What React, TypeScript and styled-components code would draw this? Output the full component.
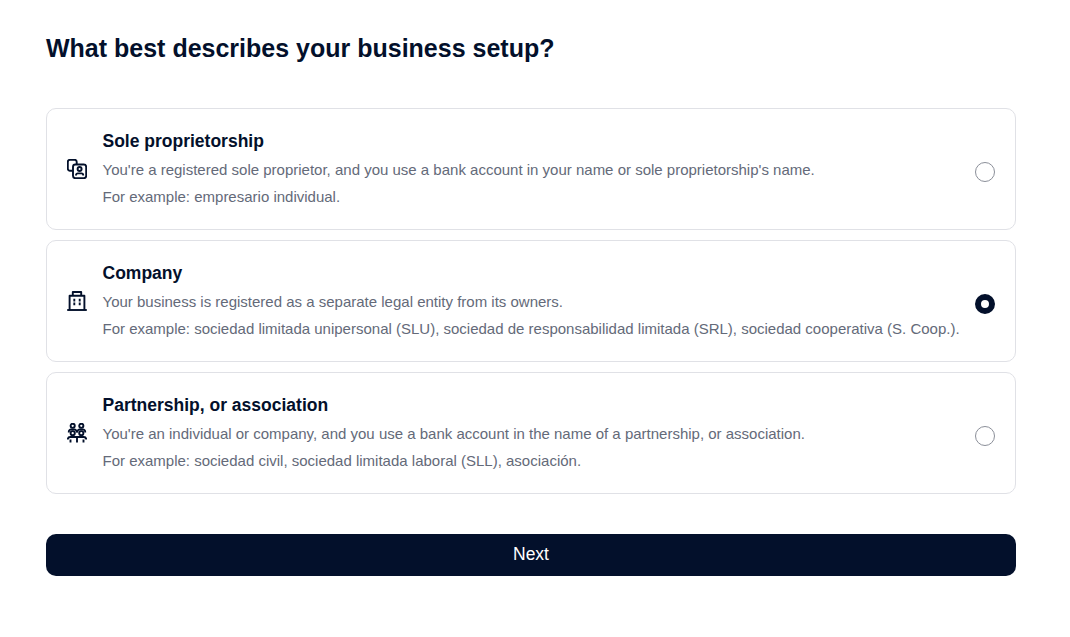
import React from "react";
import styled, { createGlobalStyle } from "styled-components";

const Global = createGlobalStyle`
  html, body { margin: 0; padding: 0; background: #fff; }
  body { font-family: "Liberation Sans", Arial, sans-serif; color: #03102b; }
`;

const Page = styled.main`
  width: 970px;
  padding: 31px 54px 61px 46px;
`;

const Title = styled.h1`
  margin: 0 0 43px;
  font-size: 25px;
  line-height: 34px;
  font-weight: 700;
  color: #03102b;
`;

const List = styled.div`
  display: flex;
  flex-direction: column;
  gap: 10px;
`;

const Card = styled.label`
  box-sizing: border-box;
  height: 122px;
  display: flex;
  align-items: center;
  border: 1px solid #e0e1e6;
  border-radius: 10px;
  padding: 0 20px;
  background: #fff;
`;

const IconSlot = styled.span`
  width: 20px;
  height: 20px;
  margin-right: 15.5px;
  flex: none;
  display: flex;
  color: #03102b;
`;

const Body = styled.div`
  flex: 1;
  min-width: 0;
`;

const Name = styled.div`
  font-size: 17.5px;
  line-height: 24px;
  font-weight: 700;
  color: #03102b;
  margin-bottom: 3px;
`;

const Line = styled.div`
  font-size: 15px;
  line-height: 27px;
  color: #646a79;
  white-space: nowrap;
`;

const Radio = styled.span<{ $on?: boolean }>`
  box-sizing: border-box;
  width: 20px;
  height: 20px;
  margin-top: 6px;
  flex: none;
  border-radius: 50%;
  background: #fff;
  border: ${(p) => (p.$on ? "6px solid #03102b" : "1px solid #8b8f99")};
`;

const NextButton = styled.button`
  display: block;
  width: 100%;
  height: 42px;
  margin-top: 40px;
  padding: 0 0 2px;
  border: 0;
  border-radius: 10px;
  background: #03102b;
  color: #fff;
  font-family: inherit;
  font-size: 17.5px;
`;

const Svg = styled.svg.attrs({
  viewBox: "0 0 20 20",
  fill: "none",
  stroke: "currentColor",
  strokeLinejoin: "round",
})`
  width: 20px;
  height: 20px;
`;

const PersonIcon = () => (
  <Svg strokeWidth={1.9}>
    <path d="M5.500 11.800H3a2.200 2.200 0 0 1-2.200-2.200V3A2.200 2.200 0 0 1 3 .8h4.500A2.200 2.200 0 0 1 9.700 3v2" />
    <rect x="6" y="5.500" width="13.200" height="13.700" rx="2.400" />
    <circle cx="12.600" cy="10" r="2" />
    <path d="M9 16.500v-.3a1.800 1.800 0 0 1 1.800-1.800h3.600a1.800 1.800 0 0 1 1.800 1.800v.3" />
  </Svg>
);

const BuildingIcon = () => (
  <Svg strokeWidth={1.9}>
    <path d="M.2 19h19.600" />
    <path d="M2.600 19V4.800h14.800V19" />
    <path d="M5.800 4.800V1h8.400v3.800" />
    <path d="M7.300 7.800v2.600M12.700 7.800v2.600M7.300 11.600v2.600M12.700 11.600v2.600" />
  </Svg>
);

const GroupIcon = () => (
  <Svg strokeWidth={1.9}>
    <circle cx="5.700" cy="2.800" r="2.100" />
    <circle cx="14.300" cy="2.800" r="2.100" />
    <circle cx="5.700" cy="10.200" r="2.100" />
    <circle cx="14.300" cy="10.200" r="2.100" />
    <path d="M1.800 9.500V8.800A2.300 2.300 0 0 1 4.100 6.500h3.200A2.300 2.300 0 0 1 9.600 8.800v.7" />
    <path d="M10.400 9.500V8.800a2.300 2.300 0 0 1 2.300-2.300h3.200a2.300 2.300 0 0 1 2.300 2.300v.7" />
    <path d="M.8 16.500c0-1.400 1-2.500 2.400-2.500h13.600c1.400 0 2.400 1.100 2.400 2.500" />
    <path d="M3.500 19.500v-3M10 19.500V14M16.500 19.500v-3" />
  </Svg>
);

const options = [
  {
    name: "Sole proprietorship",
    icon: <PersonIcon />,
    lines: [
      "You're a registered sole proprietor, and you use a bank account in your name or sole proprietorship's name.",
      "For example: empresario individual.",
    ],
  },
  {
    name: "Company",
    icon: <BuildingIcon />,
    on: true,
    lines: [
      "Your business is registered as a separate legal entity from its owners.",
      "For example: sociedad limitada unipersonal (SLU), sociedad de responsabilidad limitada (SRL), sociedad cooperativa (S. Coop.).",
    ],
  },
  {
    name: "Partnership, or association",
    icon: <GroupIcon />,
    lines: [
      "You're an individual or company, and you use a bank account in the name of a partnership, or association.",
      "For example: sociedad civil, sociedad limitada laboral (SLL), asociación.",
    ],
  },
];

export default function App() {
  return (
    <Page>
      <Global />
      <Title>What best describes your business setup?</Title>
      <List>
        {options.map((o) => (
          <Card key={o.name}>
            <IconSlot>{o.icon}</IconSlot>
            <Body>
              <Name>{o.name}</Name>
              {o.lines.map((l) => (
                <Line key={l}>{l}</Line>
              ))}
            </Body>
            <Radio $on={o.on} />
          </Card>
        ))}
      </List>
      <NextButton>Next</NextButton>
    </Page>
  );
}
